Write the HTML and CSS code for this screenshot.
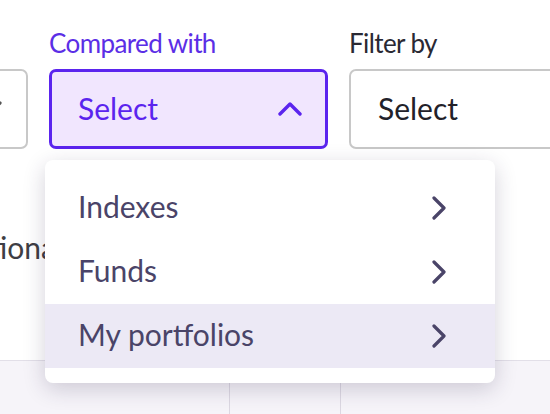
FILE: index.html
```html
<!DOCTYPE html>
<html lang="en">
<head>
<meta charset="utf-8">
<title>Compare</title>
<link rel="stylesheet" href="styles.css">
</head>
<body>
<div class="page">
  <div class="filters">
    <div class="field field-period">
      <div class="label">&nbsp;</div>
      <div class="box">
        <span class="value"></span>
        <svg class="chev" width="24" height="16" viewBox="0 0 24 16"><path d="M2 3 L12 13 L22 3" fill="none" stroke="#555" stroke-width="3.2" stroke-linecap="round" stroke-linejoin="round"/></svg>
      </div>
    </div>
    <div class="field field-compare">
      <div class="label label-active">Compared with</div>
      <div class="box box-active">
        <span class="value">Select</span>
        <svg class="chev" width="24" height="16" viewBox="0 0 24 16"><path d="M2 13 L12 3 L22 13" fill="none" stroke="#5b24ee" stroke-width="3.4" stroke-linecap="round" stroke-linejoin="round"/></svg>
      </div>
      <div class="menu">
        <div class="item"><span>Indexes</span><svg width="16" height="24" viewBox="0 0 16 24"><path d="M3 2 L13 12 L3 22" fill="none" stroke="#4a4468" stroke-width="3.2" stroke-linecap="round" stroke-linejoin="round"/></svg></div>
        <div class="item"><span>Funds</span><svg width="16" height="24" viewBox="0 0 16 24"><path d="M3 2 L13 12 L3 22" fill="none" stroke="#4a4468" stroke-width="3.2" stroke-linecap="round" stroke-linejoin="round"/></svg></div>
        <div class="item item-hover"><span>My portfolios</span><svg width="16" height="24" viewBox="0 0 16 24"><path d="M3 2 L13 12 L3 22" fill="none" stroke="#4a4468" stroke-width="3.2" stroke-linecap="round" stroke-linejoin="round"/></svg></div>
      </div>
    </div>
    <div class="field field-filter">
      <div class="label">Filter by</div>
      <div class="box">
        <span class="value value-dark">Select</span>
      </div>
    </div>
  </div>
  <div class="options">
    <span class="option">Additional</span>
  </div>
  <div class="table">
    <div class="cell"></div>
    <div class="cell"></div>
    <div class="cell"></div>
  </div>
</div>
</body>
</html>
```

FILE: styles.css
```css
* { box-sizing: border-box; }
html, body { margin: 0; padding: 0; }
body {
  width: 550px;
  height: 414px;
  overflow: hidden;
  background: #ffffff;
  font-family: "Lato", "Noto Sans", sans-serif;
}
.page {
  display: flex;
  flex-direction: column;
  height: 414px;
}
.filters {
  display: flex;
  gap: 21px;
  padding-top: 25px;
  margin-left: -172px;
}
.field {
  position: relative;
  flex: 0 0 279px;
}
.field-period { flex-basis: 200px; }
.label {
  font-size: 26px;
  line-height: 36px;
  letter-spacing: -0.6px;
  color: #2a2933;
  margin-bottom: 8px;
  white-space: nowrap;
}
.label-active { color: #5b2ee6; }
.box {
  height: 80px;
  border: 2px solid #c8c8c8;
  border-radius: 7px;
  display: flex;
  align-items: center;
  justify-content: space-between;
  padding: 0 24px 2px 27px;
  background: #fff;
}
.box-active {
  border: 3px solid #5b24ee;
  background: #f1e6fe;
  padding-left: 26px;
  padding-right: 23px;
  padding-bottom: 0;
}
.box-active .value { margin-bottom: 2px; }
.value {
  font-size: 30px;
  color: #5b24ee;
}
.value-dark { color: #222129; }
.menu {
  position: absolute;
  top: calc(100% + 11px);
  left: -4px;
  width: 450px;
  background: #fff;
  border-radius: 8px;
  padding: 16px 0 15px;
  box-shadow: 0 6px 22px rgba(40, 30, 70, 0.2);
  z-index: 5;
}
.item {
  height: 64px;
  display: flex;
  align-items: center;
  justify-content: space-between;
  padding: 0 48px 0 33px;
  font-size: 30px;
  color: #4a4468;
}
.item span { margin-bottom: 4px; }
.item-hover { background: #ece9f5; }
.options {
  margin-top: 83px;
  margin-left: -72px;
  font-size: 30px;
  color: #3e3e44;
  line-height: 30px;
}
.table {
  margin-top: auto;
  height: 54px;
  border-top: 1px solid #e2dfe8;
  background: #f6f4f9;
  display: grid;
  grid-template-columns: 229px 111px 1fr;
}
.cell + .cell { border-left: 1px solid #dcd8e2; }
```
